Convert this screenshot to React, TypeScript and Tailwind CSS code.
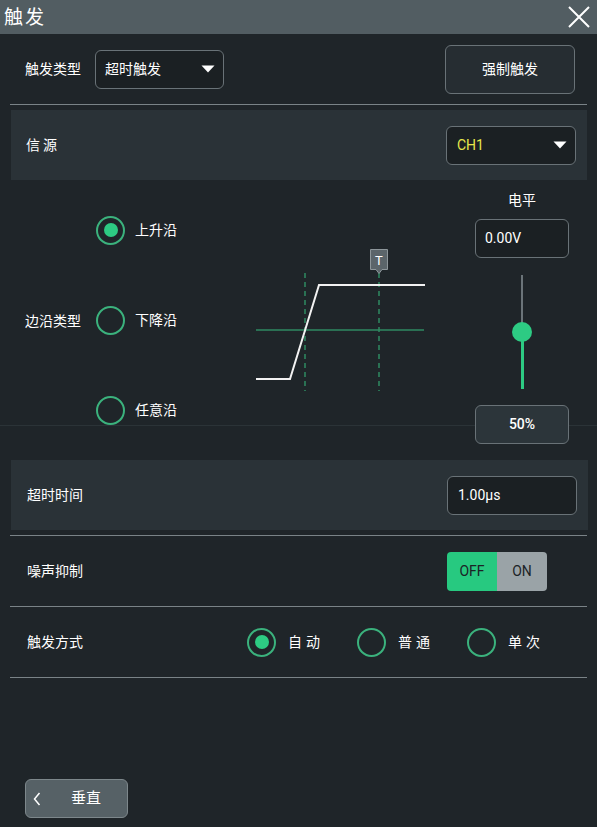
import React from "react";

const FONT = 'Roboto, "Noto Sans CJK SC", "Noto Sans", sans-serif';

function Caret() {
  return (
    <svg width="14" height="8" viewBox="0 0 14 8">
      <path d="M0.5 0.5 H13.5 L7 7.5 Z" fill="#ffffff" />
    </svg>
  );
}

function Radio({ checked }: { checked?: boolean }) {
  return (
    <div className="w-[29px] h-[29px] rounded-full border-[2.5px] border-[#3bb27d] flex items-center justify-center shrink-0">
      {checked && <div className="w-[14px] h-[14px] rounded-full bg-[#2dcb83]" />}
    </div>
  );
}

export default function App() {
  return (
    <div
      className="w-[597px] h-[827px] bg-[#1f2529] text-white flex flex-col overflow-hidden relative"
      style={{ fontFamily: FONT }}
    >
      {/* Title bar */}
      <div className="h-[34px] bg-[#525d62] flex items-center justify-between pl-[4px] pr-[7px] shrink-0">
        <span className="text-[19px] tracking-[2px] leading-none">触发</span>
        <svg width="22" height="22" viewBox="0 0 22 22">
          <path d="M1 1 L21 21 M21 1 L1 21" stroke="#ffffff" strokeWidth="2" />
        </svg>
      </div>

      {/* Trigger type row */}
      <div className="h-[70px] flex items-center shrink-0">
        <span className="pl-[25px] text-[14px]">触发类型</span>
        <div className="ml-[14px] w-[129px] h-[39px] rounded-[6px] border border-[#697277] bg-[#1b2023] flex items-center justify-between pl-[9px] pr-[8px]">
          <span className="text-[14px]">超时触发</span>
          <Caret />
        </div>
        <div className="ml-auto mr-[22px] w-[130px] h-[49px] rounded-[6px] border border-[#697277] bg-[#262d32] flex items-center justify-center text-[14px]">
          强制触发
        </div>
      </div>
      <div className="mx-[10px] h-px bg-[#7a8387] shrink-0" />

      {/* Source panel */}
      <div className="mt-[5px] ml-[11px] mr-[10px] h-[70px] bg-[#2a3237] flex items-center justify-between shrink-0">
        <span className="pl-[15px] text-[14px] tracking-[3px]">信源</span>
        <div className="mr-[11px] w-[130px] h-[39px] rounded-[6px] border border-[#697277] bg-[#1b2023] flex items-center justify-between pl-[10px] pr-[8px]">
          <span className="text-[14px] text-[#e6e84c]">CH1</span>
          <Caret />
        </div>
      </div>

      {/* Edge area */}
      <div className="h-[270px] flex relative shrink-0">
        <div className="absolute left-0 right-0 top-[245px] h-px bg-[#2b3337]" />
        <div className="w-[96px] pl-[25px] flex items-center pt-[12px] text-[14px] relative">边沿类型</div>
        <div className="w-[150px] flex flex-col pt-[36px] gap-[62px] relative">
          {[
            ["上升沿", true],
            ["下降沿", false],
            ["任意沿", false],
          ].map(([t, c]) => (
            <div key={t as string} className="h-[28px] flex items-center">
              <Radio checked={c as boolean} />
              <span className="ml-[10px] text-[14px]">{t as string}</span>
            </div>
          ))}
        </div>
        <div className="ml-[4px] mt-[65px] relative">
          <svg width="180" height="150" viewBox="0 0 180 150">
            <line x1="6" y1="85" x2="174" y2="85" stroke="#2f8a62" strokeWidth="1.5" />
            <line x1="55" y1="28" x2="55" y2="146" stroke="#2f8a62" strokeWidth="1.5" strokeDasharray="5 4" />
            <line x1="129" y1="28" x2="129" y2="146" stroke="#2f8a62" strokeWidth="1.5" strokeDasharray="5 4" />
            <polyline points="6,134 40,134 69,40 175,40" fill="none" stroke="#f2f2f2" strokeWidth="2" />
            <path d="M120.5 4.5 H137.5 V24.5 H132 L129 28.5 L126 24.5 H120.5 Z" fill="#5b656a" stroke="#8d969a" strokeWidth="1" />
            <text x="129" y="20" textAnchor="middle" fill="#ffffff" fontSize="13" fontFamily="Roboto, sans-serif">T</text>
          </svg>
        </div>
        <div className="ml-auto mr-[28px] w-[94px] flex flex-col items-center pt-[10px] relative">
          <div className="h-[20px] text-[14px] leading-[20px]">电平</div>
          <div className="mt-[9px] w-[94px] h-[39px] rounded-[6px] border border-[#697277] bg-[#1b2023] flex items-center pl-[9px] text-[14px]">
            0.00V
          </div>
          <div className="mt-[17px] h-[114px] w-[20px] flex flex-col items-center relative">
            <div className="w-[2px] h-[57px] bg-[#6b7479]" />
            <div className="w-[3px] h-[57px] bg-[#2dcb83]" />
            <div className="absolute top-[47px] left-0 w-[20px] h-[20px] rounded-full bg-[#2dcb83]" />
          </div>
          <div className="mt-[16px] w-[94px] h-[39px] rounded-[6px] border border-[#697277] bg-[#2c353a] flex items-center justify-center text-[14px] font-medium">
            50%
          </div>
        </div>
      </div>

      {/* Timeout panel */}
      <div className="mt-[10px] ml-[11px] mr-[9px] h-[70px] bg-[#2a3237] flex items-center justify-between shrink-0">
        <span className="pl-[16px] text-[14px]">超时时间</span>
        <div className="mr-[11px] w-[130px] h-[39px] rounded-[6px] border border-[#697277] bg-[#1b2023] flex items-center pl-[10px] text-[14px]">
          1.00μs
        </div>
      </div>
      <div className="mt-[5px] mx-[10px] h-px bg-[#7a8387] shrink-0" />

      {/* Noise reject */}
      <div className="h-[70px] flex items-center justify-between shrink-0">
        <span className="pl-[27px] text-[14px]">噪声抑制</span>
        <div className="mr-[50px] w-[100px] h-[39px] rounded-[4px] overflow-hidden flex text-[14px] text-[#1c2326]">
          <div className="w-[50px] bg-[#27c980] flex items-center justify-center">OFF</div>
          <div className="w-[50px] bg-[#9aa3a7] flex items-center justify-center">ON</div>
        </div>
      </div>
      <div className="mx-[10px] h-px bg-[#7a8387] shrink-0" />

      {/* Trigger mode */}
      <div className="h-[70px] flex items-center shrink-0">
        <span className="pl-[27px] w-[247px] text-[14px]">触发方式</span>
        <div className="flex items-center gap-[82px]">
          {[
            ["自动", true],
            ["普通", false],
            ["单次", false],
          ].map(([t, c]) => (
            <div key={t as string} className="flex items-center w-[28px] h-[28px] relative">
              <Radio checked={c as boolean} />
              <span className="absolute left-[41px] text-[14px] tracking-[4px] whitespace-nowrap">{t as string}</span>
            </div>
          ))}
        </div>
      </div>
      <div className="mx-[10px] h-px bg-[#7a8387] shrink-0" />

      <div className="flex-1" />

      {/* Bottom button */}
      <div className="ml-[25px] mb-[9px] w-[103px] h-[39px] rounded-[6px] border border-[#7d878b] bg-[#566166] flex items-center relative shrink-0">
        <svg className="absolute left-[7px]" width="8" height="14" viewBox="0 0 8 14">
          <path d="M6.5 1 L1.5 7 L6.5 13" fill="none" stroke="#ffffff" strokeWidth="1.5" />
        </svg>
        <span className="ml-[45px] text-[15px]">垂直</span>
      </div>
    </div>
  );
}
